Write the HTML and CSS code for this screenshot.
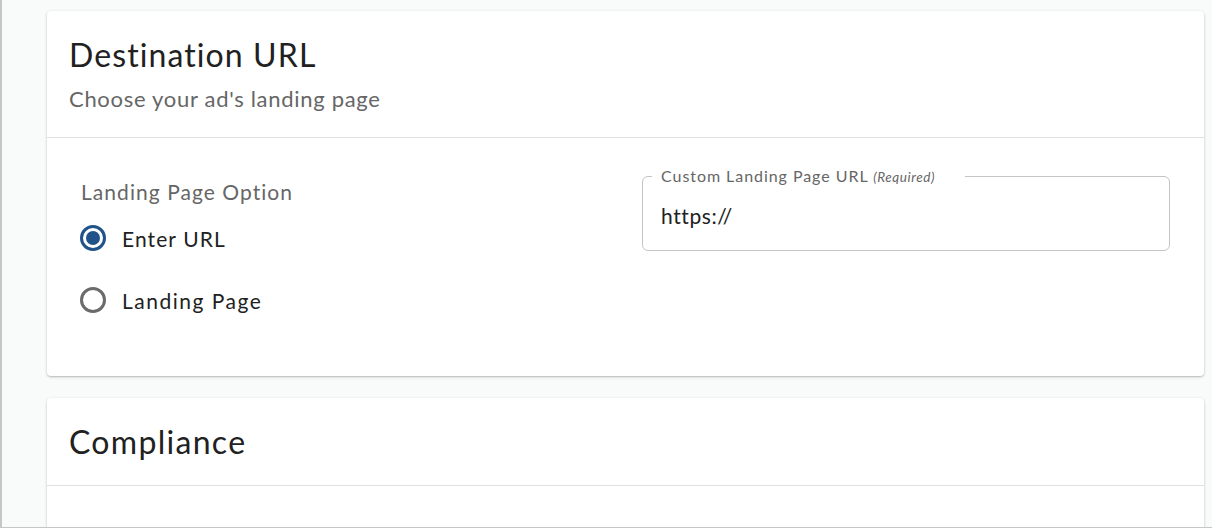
FILE: index.html
```html
<!DOCTYPE html>
<html lang="en">
<head>
<meta charset="utf-8">
<title>Destination URL</title>
<link rel="stylesheet" href="styles.css">
</head>
<body>
<main class="page">
  <section class="card">
    <header class="card-header">
      <h2 class="card-title">Destination URL</h2>
      <p class="card-subtitle">Choose your ad's landing page</p>
    </header>
    <div class="card-body">
      <div class="options">
        <div class="options-label">Landing Page Option</div>
        <label class="radio-row">
          <svg class="radio radio-checked" viewBox="0 0 26 26" width="26" height="26"><circle cx="13" cy="13" r="11.5" fill="none" stroke="currentColor" stroke-width="3"/><circle cx="13" cy="13" r="7" fill="currentColor"/></svg>
          <span class="radio-text">Enter URL</span>
        </label>
        <label class="radio-row">
          <svg class="radio radio-empty" viewBox="0 0 26 26" width="26" height="26"><circle cx="13" cy="13" r="11.5" fill="none" stroke="currentColor" stroke-width="3"/></svg>
          <span class="radio-text">Landing Page</span>
        </label>
      </div>
      <div class="field">
        <span class="field-label">Custom Landing Page URL <em class="field-req">(Required)</em></span>
        <div class="field-value">https://</div>
      </div>
    </div>
  </section>
  <section class="card">
    <header class="card-header card-header-simple">
      <h2 class="card-title">Compliance</h2>
    </header>
    <div class="card-body-empty"></div>
  </section>
</main>
</body>
</html>
```

FILE: styles.css
```css
* { box-sizing: border-box; }
html, body { margin: 0; height: 100%; }
body {
  background: #f9fafa;
  border-left: 2px solid #c6c6c6;
  border-bottom: 1px solid #c6c6c6;
  font-family: Lato, "Noto Sans", sans-serif;
  color: #212121;
  overflow: hidden;
}
.page {
  padding: 11px 8px 0 45px;
  display: flex;
  flex-direction: column;
  gap: 22px;
}
.card {
  background: #fff;
  border-radius: 4px;
  box-shadow: 0 1px 3px rgba(0,0,0,0.22), 0 1px 1px rgba(0,0,0,0.08);
}
.card-header {
  padding: 24px 22px 24px 22px;
  border-bottom: 1px solid #e0e0e0;
}
.card-header-simple { padding-bottom: 23px; }
.card-title {
  margin: 0;
  font-size: 32px;
  line-height: 40px;
  font-weight: 400;
  letter-spacing: 1.1px;
  color: #212121;
}
.card-header-simple .card-title { letter-spacing: 1.3px; }
.card-subtitle {
  margin: 10px 0 0;
  font-size: 22px;
  line-height: 28px;
  letter-spacing: 0.7px;
  color: #666;
}
.card-body {
  display: grid;
  grid-template-columns: 1fr 1fr;
  column-gap: 34px;
  align-items: start;
  padding: 38px 34px 52px 33px;
}
.options { display: flex; flex-direction: column; }
.options-label {
  padding-top: 2px;
  margin-bottom: 8px;
  font-size: 21px;
  line-height: 28px;
  letter-spacing: 1.05px;
  color: #666;
  padding-left: 1px;
}
.radio-row {
  display: flex;
  align-items: center;
  height: 48px;
  gap: 16px;
  font-size: 21px;
  letter-spacing: 1.1px;
}
.radio-row + .radio-row { margin-top: 14px; }
.radio-row + .radio-row .radio-text { letter-spacing: 1.5px; }
.radio { flex: none; }
.radio-checked { color: #1f5389; }
.radio-empty { color: #6b6b6b; }
.radio-text { color: #212121; }
.field {
  position: relative;
  height: 75px;
  border: 1px solid #c4c4c4;
  border-radius: 6px;
  display: flex;
  align-items: center;
  padding: 0 18px;
}
.field-label {
  position: absolute;
  top: -11px;
  left: 9px;
  padding: 0 30px 0 9px;
  background: #fff;
  font-size: 16px;
  line-height: 20px;
  letter-spacing: 0.95px;
  color: #666;
}
.field-req { font-size: 13.5px; letter-spacing: 0.6px; }
.field-value {
  font-size: 21px;
  letter-spacing: 0.6px;
  color: #212121;
  margin-top: 4px;
}
.card-body-empty { height: 60px; }
```
